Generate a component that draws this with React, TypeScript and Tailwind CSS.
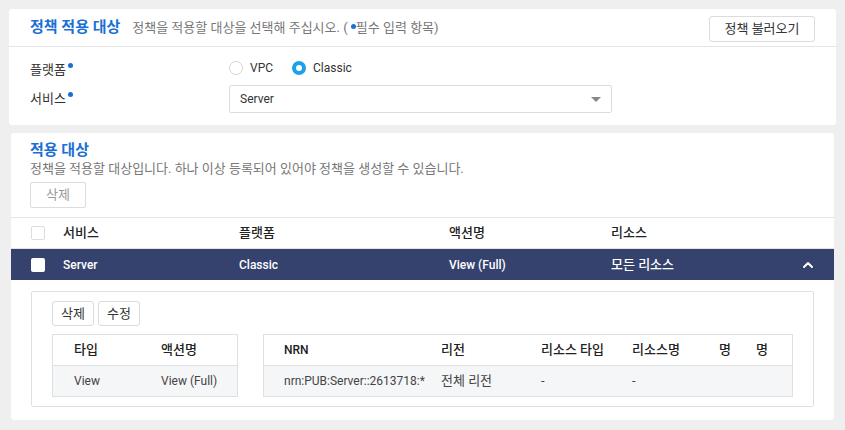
import { ChevronUp } from "lucide-react";

const font = { fontFamily: "Roboto, 'Noto Sans CJK KR', sans-serif" };

function Dot() {
  return <span className="ml-[2px] inline-block h-[5px] w-[5px] -translate-y-[6px] rounded-full bg-[#1a6fd6]" />;
}

function Radio({ label, checked }: { label: string; checked?: boolean }) {
  return (
    <label className="flex items-center gap-[7px]">
      {checked ? (
        <span className="flex h-[14px] w-[14px] items-center justify-center rounded-full bg-[#1da1e8]">
          <span className="h-[6px] w-[6px] rounded-full bg-white" />
        </span>
      ) : (
        <span className="h-[14px] w-[14px] rounded-full border border-[#d5d5d5] bg-white" />
      )}
      <span className="text-[12px] text-[#333]">{label}</span>
    </label>
  );
}

function SmallBtn({ children }: { children: React.ReactNode }) {
  return (
    <button className="h-[25px] rounded-[3px] border border-[#dcdcdc] bg-white px-[8px] text-[13px] text-[#333]">
      {children}
    </button>
  );
}

export default function App() {
  return (
    <div style={font} className="min-h-[430px] w-[845px] bg-[#efefef] pt-[9px] text-[#333]">
      {/* 정책 적용 대상 */}
      <div className="ml-[9px] w-[827px] rounded-[3px] bg-white">
        <div className="flex h-[38px] items-center border-b border-[#e5e5e5] pl-[21px] pr-[21px]">
          <h2 className="text-[15px] font-bold text-[#1a6fd6]">정책 적용 대상</h2>
          <span className="ml-[12px] text-[13px] text-[#777]">
            정책을 적용할 대상을 선택해 주십시오. ( <span className="inline-block h-[5px] w-[5px] -translate-y-[3px] rounded-full bg-[#1a6fd6]" />필수 입력 항목)
          </span>
          <button className="ml-auto mt-[2px] h-[26px] w-[106px] rounded-[3px] border border-[#dcdcdc] bg-white text-[13px] text-[#333]">
            정책 불러오기
          </button>
        </div>
        <div className="pb-[12px] pl-[21px] pt-[12px]">
          <div className="flex h-[22px] items-start">
            <div className="mt-[2px] w-[199px] text-[13px] leading-[18px]">
              플랫폼
              <Dot />
            </div>
            <div className="flex items-center gap-[19px]">
              <Radio label="VPC" />
              <Radio label="Classic" checked />
            </div>
          </div>
          <div className="mt-[4px] flex items-center">
            <div className="w-[199px] text-[13px]">
              서비스
              <Dot />
            </div>
            <div className="flex h-[28px] w-[383px] items-center justify-between rounded-[2px] border border-[#dcdcdc] pl-[10px] pr-[10px] text-[12px]">
              <span>Server</span>
              <span className="h-0 w-0 border-x-[5px] border-t-[5px] border-x-transparent border-t-[#888]" />
            </div>
          </div>
        </div>
      </div>

      {/* 적용 대상 */}
      <div className="ml-[11px] mt-[8px] h-[287px] w-[823px] rounded-[3px] bg-white">
        <div className="pl-[19px] pt-[7px]">
          <h2 className="text-[15px] font-bold leading-[20px] text-[#1a6fd6]">적용 대상</h2>
          <p className="text-[13px] leading-[18px] text-[#777]">
            정책을 적용할 대상입니다. 하나 이상 등록되어 있어야 정책을 생성할 수 있습니다.
          </p>
          <button className="mt-[4px] h-[26px] w-[56px] rounded-[2px] border border-[#dcdcdc] bg-white text-[13px] text-[#999]">
            삭제
          </button>
        </div>

        <div className="mt-[9px] flex h-[32px] items-center border-y border-[#e3e3e3] text-[13px] font-medium text-[#222]">
          <div className="flex w-[228px] items-center pl-[20px]">
            <span className="h-[14px] w-[14px] rounded-[2px] border border-[#ddd] bg-white" />
            <span className="ml-[18px]">서비스</span>
          </div>
          <div className="w-[210px]">플랫폼</div>
          <div className="w-[162px]">액션명</div>
          <div>리소스</div>
        </div>
        <div className="flex h-[31px] items-center bg-[#35426e] text-[12px] font-medium text-white">
          <div className="flex w-[228px] items-center pl-[20px]">
            <span className="h-[14px] w-[14px] rounded-[2px] bg-white" />
            <span className="ml-[18px]">Server</span>
          </div>
          <div className="w-[210px]">Classic</div>
          <div className="w-[162px]">View (Full)</div>
          <div className="flex-1 text-[13px]">모든 리소스</div>
          <ChevronUp className="mr-[18px] h-[16px] w-[16px]" strokeWidth={3} />
        </div>

        <div className="px-[20px] pt-[11px]">
          <div className="h-[116px] w-[783px] rounded-[2px] border border-[#e0e0e0] pl-[20px] pt-[9px]">
            <div className="flex gap-[4px]">
              <SmallBtn>삭제</SmallBtn>
              <SmallBtn>수정</SmallBtn>
            </div>
            <div className="mt-[8px] flex gap-[25px] text-[13px]">
              <div className="w-[186px] border border-[#e0e0e0]">
                <div className="flex h-[31px] items-center border-b border-[#e0e0e0] font-medium text-[#222]">
                  <div className="w-[108px] pl-[21px]">타입</div>
                  <div>액션명</div>
                </div>
                <div className="flex h-[30px] items-center bg-[#f5f6f8] text-[12px] text-[#444]">
                  <div className="w-[108px] pl-[21px]">View</div>
                  <div>View (Full)</div>
                </div>
              </div>
              <div className="w-[530px] border border-[#e0e0e0]">
                <div className="flex h-[31px] items-center border-b border-[#e0e0e0] font-medium text-[#222]">
                  <div className="w-[177px] pl-[20px] text-[12px]">NRN</div>
                  <div className="w-[100px]">리전</div>
                  <div className="w-[91px]">리소스 타입</div>
                  <div className="w-[87px]">리소스명</div>
                  <div className="w-[37px]">명</div>
                  <div>명</div>
                </div>
                <div className="flex h-[30px] items-center bg-[#f5f6f8] text-[#444]">
                  <div className="w-[177px] pl-[20px] text-[12px]">nrn:PUB:Server::2613718:*</div>
                  <div className="w-[100px]">전체 리전</div>
                  <div className="w-[91px]">-</div>
                  <div className="w-[87px]">-</div>
                </div>
              </div>
            </div>
          </div>
        </div>
      </div>
    </div>
  );
}
